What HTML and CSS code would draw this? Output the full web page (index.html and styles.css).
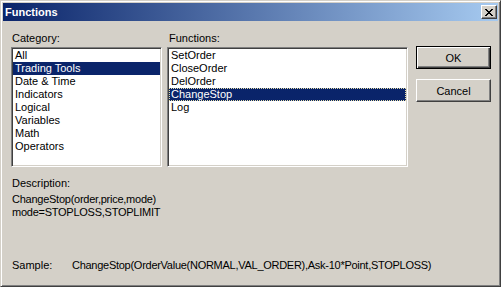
FILE: index.html
```html
<!DOCTYPE html>
<html lang="en">
<head>
    <meta charset="UTF-8">
    <title>Functions</title>
    <link rel="stylesheet" href="styles.css">
</head>
<body>
    <div class="window">
        <div class="titlebar">
            <span class="title">Functions</span>
            <button class="close" aria-label="Close">
                <svg width="8" height="7" viewBox="0 0 8 7" shape-rendering="crispEdges">
                    <path fill="#000" d="M0 0h2v1H0z M6 0h2v1H6z M1 1h2v1H1z M5 1h2v1H5z M2 2h4v1H2z M3 3h2v1H3z M2 4h4v1H2z M1 5h2v1H1z M5 5h2v1H5z M0 6h2v1H0z M6 6h2v1H6z"/>
                </svg>
            </button>
        </div>
        <div class="content">
            <div class="top">
                <div class="field category">
                    <div class="label">Category:</div>
                    <ul class="listbox">
                        <li>All</li>
                        <li class="selected">Trading Tools</li>
                        <li>Date &amp; Time</li>
                        <li>Indicators</li>
                        <li>Logical</li>
                        <li>Variables</li>
                        <li>Math</li>
                        <li>Operators</li>
                    </ul>
                </div>
                <div class="field functions">
                    <div class="label">Functions:</div>
                    <ul class="listbox">
                        <li>SetOrder</li>
                        <li>CloseOrder</li>
                        <li>DelOrder</li>
                        <li class="selected focused">ChangeStop</li>
                        <li>Log</li>
                    </ul>
                </div>
                <div class="buttons">
                    <button class="btn default">OK</button>
                    <button class="btn">Cancel</button>
                </div>
            </div>
            <div class="desc-label">Description:</div>
            <div class="desc">ChangeStop(order,price,mode)<br>mode=STOPLOSS,STOPLIMIT</div>
            <div class="sample">
                <span class="sample-label">Sample:</span>
                <span class="sample-code">ChangeStop(OrderValue(NORMAL,VAL_ORDER),Ask-10*Point,STOPLOSS)</span>
            </div>
        </div>
    </div>
</body>
</html>
```

FILE: styles.css
```css
html, body {
    margin: 0;
    padding: 0;
    background: #d4d0c8;
}
body {
    font-family: "Liberation Sans", Arial, sans-serif;
    font-size: 11px;
    color: #000;
}
.window {
    box-sizing: border-box;
    width: 501px;
    height: 287px;
    display: flex;
    flex-direction: column;
    background: #d4d0c8;
    border: 1px solid;
    border-color: #d4d0c8 #404040 #404040 #d4d0c8;
    box-shadow: inset 1px 1px #fff, inset -1px -1px #808080;
    padding: 2px;
}
.titlebar {
    height: 18px;
    display: flex;
    align-items: center;
    justify-content: space-between;
    padding: 0 1px 0 2px;
    background: linear-gradient(to right, #0a246a, #a6caf0);
}
.title {
    color: #fff;
    font-weight: bold;
    font-size: 11px;
    line-height: 18px;
}
.close {
    box-sizing: border-box;
    width: 16px;
    height: 14px;
    padding: 0;
    margin: 0;
    display: flex;
    align-items: center;
    justify-content: center;
    background: #d4d0c8;
    border: 1px solid;
    border-color: #fff #404040 #404040 #fff;
    box-shadow: inset -1px -1px #808080;
}
.close svg {
    display: block;
}
.content {
    flex: 1;
    display: flex;
    flex-direction: column;
    padding: 11px 7px 12px 8px;
    line-height: 13px;
}
.top {
    display: flex;
}
.field {
    display: flex;
    flex-direction: column;
}
.category {
    width: 151px;
}
.functions {
    width: 241px;
    margin-left: 5px;
}
.label {
    padding-left: 1px;
    margin-bottom: 2px;
}
.functions .label {
    padding-left: 2px;
}
.listbox {
    box-sizing: border-box;
    height: 120px;
    margin: 0;
    list-style: none;
    background: #fff;
    border: 1px solid;
    border-color: #808080 #fff #fff #808080;
    box-shadow: inset 1px 1px #404040, inset -1px -1px #d4d0c8;
    padding: 1px;
}
.listbox li {
    height: 13px;
    line-height: 13px;
    padding-left: 2px;
    white-space: nowrap;
}
.listbox li.selected {
    background: #0a246a;
    color: #fff;
}
.listbox li.focused {
    outline: 1px dotted #e6dfa8;
    outline-offset: -1px;
}
.buttons {
    display: flex;
    flex-direction: column;
    gap: 10px;
    margin-left: 8px;
    margin-top: 14px;
}
.btn {
    box-sizing: border-box;
    width: 75px;
    height: 23px;
    padding: 0;
    font-family: "Liberation Sans", Arial, sans-serif;
    font-size: 11px;
    color: #000;
    background: #d4d0c8;
    border: 1px solid;
    border-color: #fff #404040 #404040 #fff;
    box-shadow: inset -1px -1px #808080, inset 1px 1px #d4d0c8;
}
.btn.default {
    border: 1px solid #000;
    box-shadow: inset 1px 1px #fff, inset -1px -1px #404040, inset -2px -2px #808080;
}
.desc-label {
    margin-top: 10px;
    padding-left: 1px;
}
.desc {
    margin-top: 3px;
    padding-left: 1px;
    letter-spacing: -0.25px;
}
.sample {
    margin-top: auto;
    display: flex;
    padding-left: 1px;
}
.sample-label {
    width: 60px;
}
.sample-code {
    letter-spacing: -0.27px;
}
```
